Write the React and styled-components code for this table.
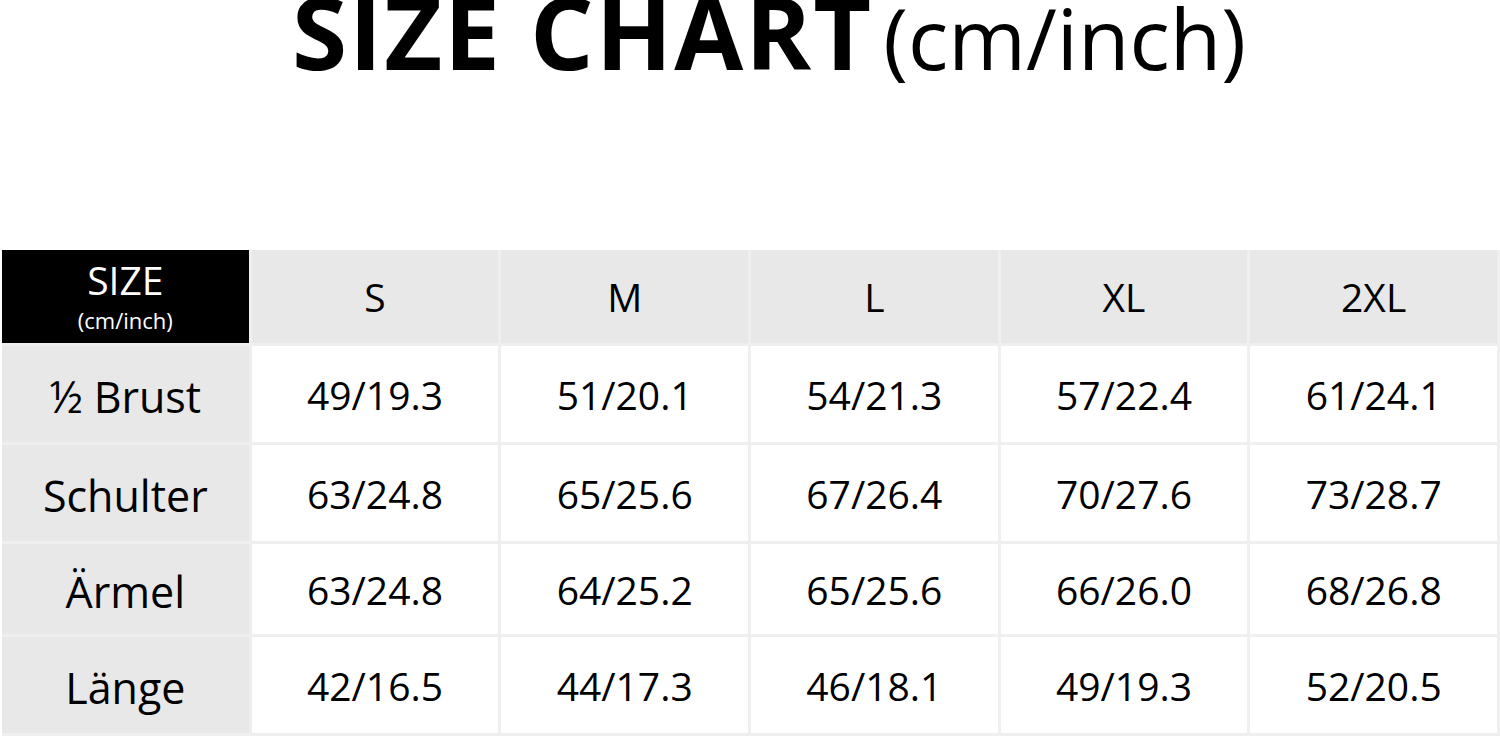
import React from 'react'
import styled, { createGlobalStyle } from 'styled-components';

const GlobalStyle = createGlobalStyle`
    html, body {
        margin: 0;
        padding: 0;
        background: #ffffff;
    }
    body {
        font-family: "Open Sans", "Noto Sans", sans-serif;
        color: #000000;
    }
`;

const sizes = ['S', 'M', 'L', 'XL', '2XL'];

const rows = [
    { label: '½ Brust', values: ['49/19.3', '51/20.1', '54/21.3', '57/22.4', '61/24.1'] },
    { label: 'Schulter', values: ['63/24.8', '65/25.6', '67/26.4', '70/27.6', '73/28.7'] },
    { label: 'Ärmel', values: ['63/24.8', '64/25.2', '65/25.6', '66/26.0', '68/26.8'] },
    { label: 'Länge', values: ['42/16.5', '44/17.3', '46/18.1', '49/19.3', '52/20.5'] },
];

const Page = styled.div`
    width: 1500px;
    height: 738px;
    overflow: hidden;
    display: flex;
    flex-direction: column;
`;

const Header = styled.div`
    height: 250px;
    display: flex;
    justify-content: center;
    align-items: flex-start;
    padding-left: 38px;
    box-sizing: border-box;
`;

const Title = styled.h1`
    margin: 0;
    font-size: 100px;
    line-height: 62px;
    font-weight: 700;
    letter-spacing: 2px;
    white-space: nowrap;
`;

const Unit = styled.span`
    font-size: 84px;
    font-weight: 400;
    letter-spacing: 0;
    margin-left: 10px;
`;

const Table = styled.div`
    margin-left: 2px;
    padding: 0 3px 3px 0;
    background: #efefef;
    display: grid;
    grid-template-columns: repeat(6, 1fr);
    grid-template-rows: 93px 96px 96px 90px 96px;
    gap: 3px;
`;

const Cell = styled.div`
    display: flex;
    flex-direction: column;
    align-items: center;
    justify-content: center;
    background: ${p => p.$tone === 'dark' ? '#000000' : p.$tone === 'gray' ? '#e8e8e8' : '#ffffff'};
    color: ${p => p.$tone === 'dark' ? '#ffffff' : '#000000'};
    font-size: ${p => p.$big ? '43px' : '39px'};
    line-height: 1;
    padding-top: ${p => p.$big ? '4px' : '0'};
`;

const CornerMain = styled.div`
    font-size: 39px;
    line-height: 1;
    font-weight: 500;
`;

const CornerSub = styled.div`
    font-size: 22px;
    line-height: 1;
    font-weight: 500;
    margin-top: 10px;
    margin-bottom: 2px;
`;

const App = () => {
    return (
        <Page>
            <GlobalStyle />
            <Header>
                <Title>SIZE CHART<Unit>(cm/inch)</Unit></Title>
            </Header>
            <Table>
                <Cell $tone="dark">
                    <CornerMain>SIZE</CornerMain>
                    <CornerSub>(cm/inch)</CornerSub>
                </Cell>
                {sizes.map(s => (
                    <Cell key={s} $tone="gray">{s}</Cell>
                ))}
                {rows.map(row => (
                    <React.Fragment key={row.label}>
                        <Cell $tone="gray" $big>{row.label}</Cell>
                        {row.values.map((v, i) => (
                            <Cell key={i}>{v}</Cell>
                        ))}
                    </React.Fragment>
                ))}
            </Table>
        </Page>
    )
}

export default App
